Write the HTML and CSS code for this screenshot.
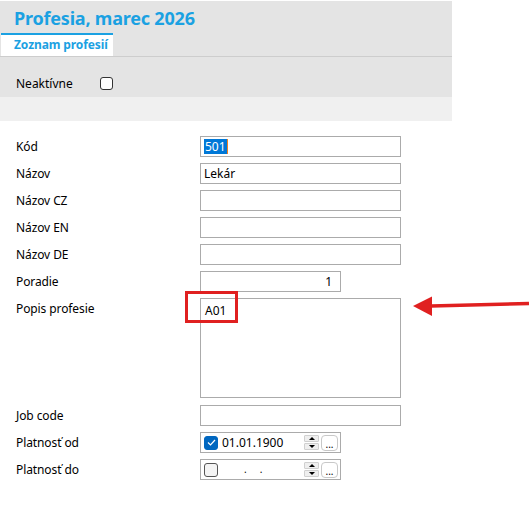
FILE: index.html
```html
<!DOCTYPE html>
<html lang="sk">
<head>
    <meta charset="UTF-8">
    <meta name="viewport" content="width=device-width, initial-scale=1.0">
    <title>Profesia</title>
    <link rel="stylesheet" href="styles.css">
</head>
<body>
    <div class="panel">
        <h1 class="title">Profesia, marec 2026</h1>
        <div class="tabs">
            <div class="tab active">Zoznam profesií</div>
        </div>
        <div class="toolbar">
            <span class="tool-label">Neaktívne</span>
            <span class="check"></span>
        </div>
    </div>
    <div class="subbar"></div>

    <div class="form">
        <div class="row">
            <label>Kód</label>
            <div class="field"><span class="sel">501</span><span class="caret"></span></div>
        </div>
        <div class="row">
            <label>Názov</label>
            <div class="field">Lekár</div>
        </div>
        <div class="row">
            <label>Názov CZ</label>
            <div class="field"></div>
        </div>
        <div class="row">
            <label>Názov EN</label>
            <div class="field"></div>
        </div>
        <div class="row">
            <label>Názov DE</label>
            <div class="field"></div>
        </div>
        <div class="row">
            <label>Poradie</label>
            <div class="field short num">1</div>
        </div>
        <div class="row tall">
            <label>Popis profesie</label>
            <div class="field area">A01</div>
        </div>
        <div class="row">
            <label>Job code</label>
            <div class="field"></div>
        </div>
        <div class="row">
            <label>Platnosť od</label>
            <div class="field short date">
                <span class="dcheck on">
                    <svg width="9" height="7" viewBox="0 0 9 7"><path d="M1 3.5 L3.5 6 L8 1" fill="none" stroke="#fff" stroke-width="1.2"/></svg>
                </span>
                <span class="dval">01.01.1900</span>
                <span class="spin"><span class="up"></span><span class="down"></span></span>
                <span class="dots">...</span>
            </div>
        </div>
        <div class="row">
            <label>Platnosť do</label>
            <div class="field short date">
                <span class="dcheck"></span>
                <span class="dval empty">.&nbsp;&nbsp;&nbsp;&nbsp;&nbsp;.</span>
                <span class="spin"><span class="up"></span><span class="down"></span></span>
                <span class="dots">...</span>
            </div>
        </div>
    </div>

    <!-- annotation -->
    <div class="mark"></div>
    <svg class="arrow" width="120" height="24" viewBox="0 0 120 24">
        <path d="M18 10 L116 7.5" stroke="#e02020" stroke-width="3.5" fill="none"/>
        <path d="M0 10 L19 0.5 L19 20 Z" fill="#e02020"/>
    </svg>
</body>
</html>
```

FILE: styles.css
```css
body {
    margin: 0;
    font-family: "Noto Sans", "Open Sans", sans-serif;
    font-size: 12px;
    color: #000;
    background: #fff;
    position: relative;
}
.panel {
    width: 452px;
    margin-top: 1px;
    background: #e4e4e4;
}
.title {
    margin: 0;
    padding: 5px 0 0 14px;
    height: 27px;
    font-size: 18px;
    line-height: 24px;
    font-weight: 700;
    color: #1ba1e2;
    letter-spacing: -0.2px;
}
.tabs {
    display: flex;
    border-bottom: 1px solid #cdcdcd;
}
.tab {
    width: 99px;
    height: 19px;
    padding: 2px 0 0 13px;
    margin-left: 1px;
    background: #fff;
    border-top: 2px solid #1ba1e2;
    color: #1ba1e2;
    font-weight: 700;
    font-size: 12px;
    line-height: 16px;
    letter-spacing: -0.1px;
}
.toolbar {
    height: 40px;
    display: flex;
    align-items: flex-start;
    padding: 19px 0 0 16px;
    box-sizing: border-box;
}
.tool-label {
    width: 84px;
    line-height: 15px;
}
.check {
    width: 11px;
    height: 11px;
    margin-top: 1px;
    border: 1px solid #333;
    border-radius: 3px;
    background: #fff;
}
.subbar {
    width: 452px;
    height: 24px;
    background: #f0f0f0;
}
.form {
    padding: 15px 0 0 16px;
    display: flex;
    flex-direction: column;
    gap: 6px;
}
.row {
    display: flex;
    align-items: flex-start;
}
.row.tall {
    margin-bottom: 1px;
}
.row label {
    width: 184px;
    line-height: 21px;
    letter-spacing: -0.1px;
}
.field {
    width: 201px;
    height: 21px;
    border: 1px solid #ababab;
    line-height: 19px;
    padding-left: 3px;
    box-sizing: border-box;
    display: flex;
    align-items: center;
    white-space: nowrap;
}
.field.short {
    width: 141px;
}
.field.num {
    justify-content: flex-end;
    padding: 0 8px 0 0;
}
.field.area {
    height: 100px;
    align-items: flex-start;
    padding: 2px 0 0 4px;
}
.sel {
    background: #0078d7;
    color: #fff;
    line-height: 15px;
    padding: 0 1px;
}
.caret {
    width: 1px;
    height: 15px;
    background: #f08020;
}
.date {
    padding-left: 3px;
}
.dcheck {
    width: 14px;
    height: 14px;
    box-sizing: border-box;
    border: 1px solid #555;
    border-radius: 3px;
    background: #f4f4f4;
    display: flex;
    align-items: center;
    justify-content: center;
    margin-right: 4px;
}
.dcheck.on {
    background: #0067c0;
    border-color: #0067c0;
}
.dval {
    flex: 1;
    font-size: 12px;
}
.dval.empty {
    padding-left: 22px;
    font-size: 10px;
}
.spin {
    display: flex;
    flex-direction: column;
    gap: 1px;
    margin-right: 2px;
}
.spin span {
    width: 15px;
    height: 7px;
    background: #efefef;
    border: 1px solid #d0d0d0;
    box-sizing: border-box;
    position: relative;
    border-radius: 1px;
}
.spin .up::after,
.spin .down::after {
    content: "";
    position: absolute;
    left: 4px;
    border-left: 3px solid transparent;
    border-right: 3px solid transparent;
}
.spin .up::after {
    top: 1px;
    border-bottom: 3px solid #000;
}
.spin .down::after {
    top: 1px;
    border-top: 3px solid #000;
}
.dots {
    width: 17px;
    height: 16px;
    box-sizing: border-box;
    border: 1px solid #c8c8c8;
    border-radius: 4px;
    background: #fff;
    font-size: 10px;
    line-height: 16px;
    text-align: center;
    margin-right: 2px;
}
.mark {
    position: absolute;
    left: 185px;
    top: 291px;
    width: 47px;
    height: 26px;
    border: 3px solid #e02020;
}
.arrow {
    position: absolute;
    left: 413px;
    top: 296px;
}
```
